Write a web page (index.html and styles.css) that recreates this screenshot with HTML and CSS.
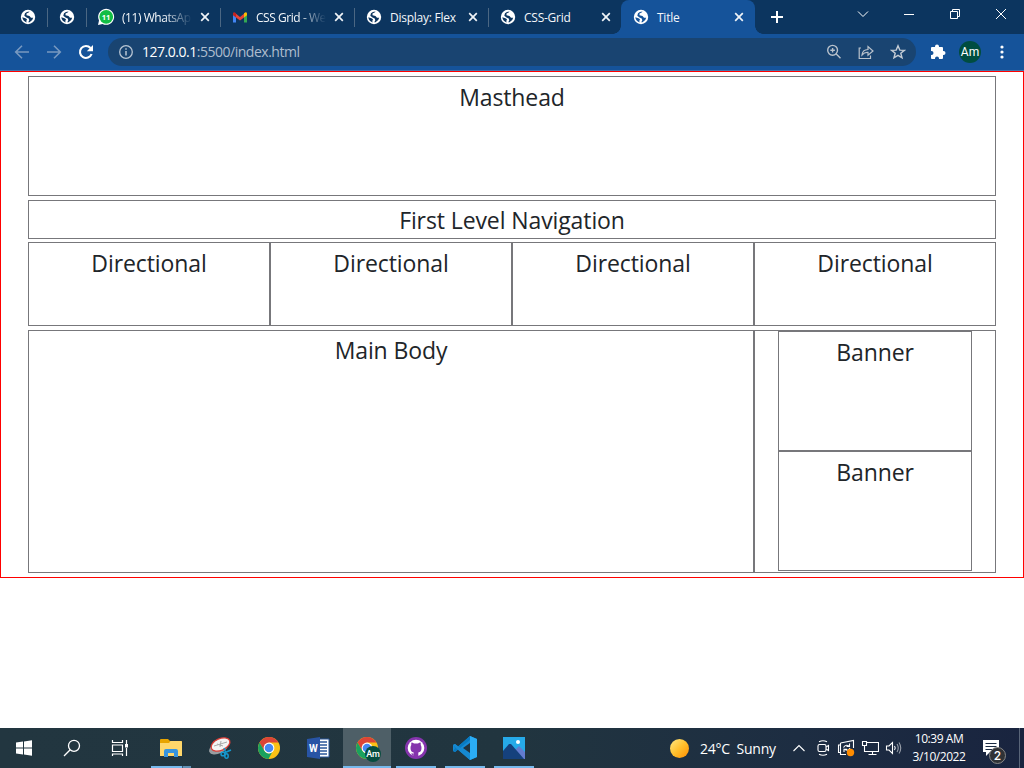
FILE: index.html
```html
<!DOCTYPE html>
<html lang="en">
<head>
<meta charset="utf-8">
<title>Title</title>
<link rel="stylesheet" href="styles.css">
</head>
<body>
<svg class="defs" width="0" height="0">
  <symbol id="globe" viewBox="0 0 16 16">
    <circle cx="8" cy="8" r="7.200" fill="#fff"/>
    <path d="M9 3.200L6.500 4.600V6.300L9.500 7L11 8.800L13.200 8.800Q12.700 12 9.500 13.300L8.300 13.300L9.300 11.200L8.700 9.400L6.500 8.500L4.300 6.700L5 4.200Q6.500 2.600 9.500 2.600ZM2.300 8.300L5.500 9.300L7 10.300L6.300 12L6.600 13.400Q2.800 12.300 2.300 8.300Z" fill="currentColor"/>
  </symbol>
  <symbol id="close" viewBox="0 0 10 10"><path d="M1.200 1.200L8.800 8.800M8.800 1.200L1.200 8.800" stroke="#f0f4f8" stroke-width="1.700"/></symbol>
  <symbol id="chrome" viewBox="0 0 24 24">
    <circle cx="12" cy="12" r="11" fill="#fbc116"/>
    <path d="M2.500 6.500A11 11 0 0 1 21.500 6.500H12L7 14.500Z" fill="#dc4437"/>
    <path d="M2.500 6.500L7.300 14.800Q9 17.500 12 17.500L15.500 15.500L11.500 23A11 11 0 0 1 2.500 6.500Z" fill="#1aa15f"/>
    <circle cx="12" cy="12" r="5.400" fill="#fff"/><circle cx="12" cy="12" r="4.300" fill="#4688f4"/>
  </symbol>
</svg>

<header class="browser">
  <div class="tabs">
    <div class="tab mini first"><svg width="16" height="16"><use href="#globe"/></svg></div>
    <div class="tab mini"><svg width="16" height="16"><use href="#globe"/></svg></div>
    <div class="tab whats">
      <svg width="18" height="18" viewBox="0 0 18 18"><path d="M1 17L2 12.500A8 8 0 1 1 5.500 16Z" fill="#fff"/><circle cx="9.200" cy="8.800" r="6.900" fill="#12bd45"/><text x="9" y="11.700" font-size="7.500" font-weight="700" fill="#fff" text-anchor="middle">11</text></svg>
      <span class="label fade">(11) WhatsAp</span><svg class="x" width="10" height="10"><use href="#close"/></svg>
    </div>
    <div class="tab">
      <svg width="16" height="16" viewBox="0 0 16 16"><path d="M1 4.500V13.500H4V7.500L2.500 4.500Z" fill="#4285f4"/><path d="M15 4.500V13.500H12V7.500L13.500 4.500Z" fill="#34a853"/><path d="M4 4.800L8 8L12 4.800V8.500L8 11.600L4 8.500Z" fill="#ea4335"/><path d="M1 4.500Q1.500 2 4 4.200V8.500L1 6.300Z" fill="#c5221f"/><path d="M15 4.500Q14.500 2 12 4.200V8.500L15 6.300Z" fill="#fbbc04"/></svg>
      <span class="label fade">CSS Grid - We</span><svg class="x" width="10" height="10"><use href="#close"/></svg>
    </div>
    <div class="tab"><svg width="16" height="16"><use href="#globe"/></svg><span class="label">Display: Flex</span><svg class="x" width="10" height="10"><use href="#close"/></svg></div>
    <div class="tab wide"><svg width="16" height="16"><use href="#globe"/></svg><span class="label">CSS-Grid</span><svg class="x" width="10" height="10"><use href="#close"/></svg></div>
    <div class="tab active"><svg width="16" height="16"><use href="#globe"/></svg><span class="label">Title</span><svg class="x" width="10" height="10"><use href="#close"/></svg></div>
    <svg class="plus" width="14" height="14" viewBox="0 0 14 14"><path d="M7 1V13M1 7H13" stroke="#fff" stroke-width="2"/></svg>
    <div class="window-controls">
      <svg width="12" height="12" viewBox="0 0 12 12"><path d="M1 3.500L6 8.500L11 3.500"/></svg>
      <svg width="12" height="12" viewBox="0 0 12 12"><path d="M1 6.500H11"/></svg>
      <svg width="12" height="12" viewBox="0 0 12 12"><path d="M3.500 3.500V1.500H10.500V8.500H8.500M1.500 3.500H8.500V10.500H1.500Z"/></svg>
      <svg width="12" height="12" viewBox="0 0 12 12"><path d="M1 1L11 11M11 1L1 11"/></svg>
    </div>
  </div>
  <div class="toolbar">
    <svg class="nav" width="16" height="16" viewBox="0 0 16 16"><path d="M15 8H2M8 1.700L1.700 8L8 14.300" fill="none" stroke="#7899c0" stroke-width="1.600"/></svg>
    <svg class="nav" width="16" height="16" viewBox="0 0 16 16"><path d="M1 8H14M8 1.700L14.300 8L8 14.300" fill="none" stroke="#7899c0" stroke-width="1.600"/></svg>
    <svg class="nav" width="16" height="16" viewBox="0 0 16 16"><path d="M13.600 10A6 6 0 1 1 12.500 4" fill="none" stroke="#fff" stroke-width="2.100"/><path d="M15 1V7.200H8.800Z" fill="#fff"/></svg>
    <div class="address">
      <svg width="16" height="16" viewBox="0 0 16 16"><circle cx="8" cy="8" r="6.300" fill="none" stroke="#b8c5d3" stroke-width="1.300"/><path d="M8 7V11.500M8 4.300V5.800" stroke="#b8c5d3" stroke-width="1.500"/></svg>
      <span class="url"><b>127.0.0.1</b>:5500/index.html</span>
      <svg width="16" height="16" viewBox="0 0 16 16"><g fill="none" stroke="#b9c2cc" stroke-width="1.400"><circle cx="6.600" cy="6.300" r="4.900"/><path d="M10 9.700L14.500 14.200M4.300 6.300H8.900M6.600 4V8.600"/></g></svg>
      <svg width="16" height="16" viewBox="0 0 16 16"><g fill="none" stroke="#b9c2cc" stroke-width="1.200"><path d="M3 4H1.200V14.500H12.500V11.500M4 11Q4.500 5.700 10 5.500V2.500L15 7L10 11.300V8.400Q6.500 8 4 11Z"/></g></svg>
      <svg width="16" height="16" viewBox="0 0 16 16"><path d="M8 1.800L9.800 6.100L14.300 6.400L10.800 9.300L12 13.800L8 11.300L4 13.800L5.200 9.300L1.700 6.400L6.200 6.100Z" fill="none" stroke="#c4ccd5" stroke-width="1.400"/></svg>
    </div>
    <svg class="ext" width="16" height="16" viewBox="0 0 16 16"><path d="M1 4Q1 3 2 3H5V2.500A2 2 0 0 1 9 2.500V3H12Q13 3 13 4V7H13.500A2 2 0 0 1 13.500 11H13V14Q13 15 12 15H9V14.500A2 2 0 0 0 5 14.500V15H2Q1 15 1 14V11H1.500A2 2 0 0 0 1.500 7H1Z" fill="#fff"/></svg>
    <span class="avatar">Am</span>
    <svg class="more" width="6" height="14" viewBox="0 0 6 14" fill="#fff"><circle cx="3" cy="2" r="1.600"/><circle cx="3" cy="7" r="1.600"/><circle cx="3" cy="12" r="1.600"/></svg>
  </div>
</header>

<main class="page">
  <section class="box masthead">Masthead</section>
  <nav class="box first-nav">First Level Navigation</nav>
  <div class="directionals">
    <div class="box">Directional</div><div class="box">Directional</div><div class="box">Directional</div><div class="box">Directional</div>
  </div>
  <div class="content">
    <section class="box main-body">Main Body</section>
    <aside class="box banners"><div class="box banner">Banner</div><div class="box banner">Banner</div></aside>
  </div>
</main>

<footer class="taskbar">
  <div class="system">
    <div class="cell"><svg width="18" height="18" viewBox="0 0 18 18" fill="#fff"><path d="M1 3.500L8 2.500V8.500H1ZM9 2.400L17 1.200V8.500H9ZM1 9.500H8V15.500L1 14.500ZM9 9.500H17V16.800L9 15.600Z"/></svg></div>
    <div class="cell"><svg width="18" height="18" viewBox="0 0 18 18" fill="none" stroke="#fff" stroke-width="1.300"><circle cx="11" cy="6.800" r="5.500"/><path d="M7.200 10.800L1 17"/></svg></div>
    <div class="cell"><svg width="18" height="18" viewBox="0 0 18 18" fill="none" stroke="#fff" stroke-width="1.200"><path d="M1.500 1V3.500H11.500V1M1.500 6H11.500V12.500H1.500ZM1.500 17V15H11.500V17M15.500 1V5M15.500 9V17"/><path d="M14 5H17V8.500H14Z" fill="#fff" stroke="none"/></svg></div>
  </div>
  <div class="apps">
    <div class="cell open split"><svg width="24" height="24" viewBox="0 0 24 24"><path d="M1 4Q1 3 2 3H9L11 5H22Q23 5 23 6V20H1Z" fill="#e8a400"/><path d="M1 7H10L11.500 5H22Q23 5 23 6V20H1Z" fill="#ffd76b"/><path d="M5 21V15Q5 13 7 13H17Q19 13 19 15V21H15V17H9V21Z" fill="#3794de"/></svg></div>
    <div class="cell"><svg width="24" height="24" viewBox="0 0 24 24"><ellipse cx="10.500" cy="12" rx="10" ry="5.500" transform="rotate(-24 10.500 12)" fill="#999ea2"/><ellipse cx="12.500" cy="8.500" rx="10" ry="5.800" transform="rotate(-24 12.500 8.500)" fill="#f4f4f4" stroke="#dc3d36" stroke-width="1.300"/><path d="M6 10L19 6M13 5L12 11M9 8L15 10" stroke="#aaa" fill="none"/><g fill="none" stroke="#1698cf" stroke-width="1.500"><path d="M16 12L17.800 17M23 14L16 17"/><ellipse cx="15" cy="18" rx="2" ry="1.800"/><ellipse cx="18.500" cy="20" rx="1.700" ry="2.300"/></g></svg></div>
    <div class="cell"><svg width="24" height="24"><use href="#chrome"/></svg></div>
    <div class="cell"><svg width="24" height="24" viewBox="0 0 24 24"><path d="M13 3H23V21H13Z" fill="#fff" stroke="#2b579a"/><path d="M14 6H21M14 9H21M14 12H21M14 15H21M14 18H21" stroke="#2b579a" stroke-width="1.300"/><path d="M1 3L14 1V23L1 21Z" fill="#2854a5"/><text x="7.400" y="15.500" font-size="10" font-weight="700" fill="#fff" text-anchor="middle">W</text></svg></div>
    <div class="cell open full"><svg width="28" height="28" viewBox="0 0 28 28"><use href="#chrome" x="1" y="2" width="24" height="24"/><circle cx="19" cy="20" r="8" fill="#064d40"/><text x="19" y="23.300" font-size="9" font-weight="500" fill="#fff" text-anchor="middle">Am</text></svg></div>
    <div class="cell open"><svg width="24" height="24" viewBox="0 0 24 24"><circle cx="12" cy="12" r="11" fill="#8534ad"/><circle cx="12" cy="12" r="8.300" fill="#fff"/><path d="M9.500 21V17.500Q7.500 18 6.500 16M9.700 16.500Q6.500 16 6.500 12Q6.500 10 7.300 9Q7 7.500 7.500 6.500Q8.800 6.500 10 7.500H14Q15.200 6.500 16.500 6.500Q17 7.500 16.700 9Q17.500 10 17.500 12Q17.500 16 14.300 16.500V21H9.700Z" fill="#8534ad"/></svg></div>
    <div class="cell open"><svg width="26" height="26" viewBox="0 0 26 26"><path d="M18 1L25 4V22L18 25L6 14.500L3 17L1 16V10L3 9L6 11.500Z" fill="#168ad4"/><path d="M18 1L25 4V22L18 25Z" fill="#2badf5"/><path d="M18 8V18L11 13Z" fill="#21343f"/><path d="M1 10L3 13L1 16L3 17L18 5V1L6 11.500Z" fill="#087ac1"/><path d="M1 10L3 9L18 20V25L5 14Z" fill="#1689d1"/></svg></div>
    <div class="cell open"><svg width="24" height="24" viewBox="0 0 24 24"><path d="M1 1H23V23H1Z" fill="#26aae9"/><path d="M13 14L17 10L23 16V23H18Z" fill="#637bce"/><path d="M1 15L7 8H9L22 23H1Z" fill="#15417d"/><circle cx="16" cy="6" r="2" fill="#fff"/></svg></div>
  </div>
  <div class="tray">
    <span class="sun"></span><span class="weather">24°C&nbsp; Sunny</span>
    <svg class="up" width="14" height="14" viewBox="0 0 14 14"><path d="M1.500 10L7 4.500L12.500 10"/></svg>
    <svg width="16" height="18" viewBox="0 0 16 18"><rect x="3" y="5.500" width="8" height="7" rx="1.500"/><path d="M11 8L13.500 6.500V11.500L11 10M4 2.700Q8 .7 12 2.700M4 15.300Q8 17.300 12 15.300"/></svg>
    <svg width="18" height="18" viewBox="0 0 18 18"><path d="M3.500 4L16.500 1.500V9M9 15.500H3.500V4M3.500 6H1.500V13.500H3.500M6.500 8.500Q8.500 5 12 7M12.500 4.500V7.500H9.500M13 9Q11 12.500 8 10.500M7 13V10.200H10"/><circle cx="13.500" cy="13.500" r="3.700" fill="#ff8c00" stroke="none"/></svg>
    <svg width="18" height="18" viewBox="0 0 18 18"><path d="M5.500 3.500H17.500V12.500H5.500M11.500 12.500V16M7.500 15.500H15.500M1.500 2.500H5.500V6.500H1.500ZM3.500 6.500V12.500H7"/></svg>
    <svg class="sound" width="18" height="18" viewBox="0 0 18 18"><path d="M1.500 7H4L7.500 3.500V14.500L4 11H1.500ZM9.500 7Q11 9 9.500 11"/><path d="M12 5Q14.500 9 12 13M14 3.500Q17.500 9 14 14.500" opacity=".55"/></svg>
    <div class="clock"><span>10:39 AM</span><span>3/10/2022</span></div>
    <div class="notice"><svg width="18" height="18" viewBox="0 0 18 18"><path d="M1 1H17V13H8L4 17V13H1Z" fill="#fff" stroke="none"/><path d="M3.500 4.500H14.500M3.500 7.500H14.500M3.500 10.500H11" stroke="#1b2b43"/></svg><span class="badge">2</span></div>
  </div>
</footer>
</body>
</html>
```

FILE: styles.css
```css
* { box-sizing: border-box; }
body { margin: 0; width: 1024px; height: 768px; overflow: hidden; display: flex; flex-direction: column; background: #fff; font-family: "Open Sans", "Noto Sans", sans-serif; }
svg { display: block; flex: none; }
.defs { position: absolute; }

.browser { height: 71px; background: #15539a; border-bottom: 1px solid #4177ae; color: #fff; }
.tabs { display: flex; height: 34px; background: #0c355f; }
.tab { display: flex; align-items: center; width: 134px; height: 34px; padding: 0 10px 0 12px; position: relative; font-size: 12px; color: #0c355f; }
.tab::before { content: ""; position: absolute; left: 0; top: 8px; width: 1px; height: 19px; background: #4b6783; }
.tab.mini { width: 39px; padding-left: 12px; }
.tab.first { width: 47px; padding-left: 20px; }
.tab.first::before, .tab.active::before { display: none; }
.tab.whats { padding-left: 11px; }
.tab.wide { width: 133px; }
.tab.active { background: #15539a; color: #15539a; border-radius: 8px 8px 0 0; padding: 0 11px 0 12px; }
.tab.active::after { content: ""; position: absolute; left: -8px; right: -8px; bottom: 0; height: 8px; background: radial-gradient(circle at 0 0, transparent 7.5px, #15539a 8px) left / 8px 8px no-repeat, radial-gradient(circle at 100% 0, transparent 7.5px, #15539a 8px) right / 8px 8px no-repeat; }
.label { flex: 1; margin-left: 8px; color: #f4f7fa; white-space: nowrap; letter-spacing: -.25px; }
.whats .label { margin-left: 7px; }
.fade { width: 70px; flex: none; margin-right: auto; -webkit-mask-image: linear-gradient(90deg, #000 60%, transparent); mask-image: linear-gradient(90deg, #000 60%, transparent); letter-spacing: -.45px; }
.plus { margin: 10px 0 0 15px; }
.window-controls { display: flex; gap: 34px; margin: 8px 17px 0 auto; fill: none; stroke: #fff; stroke-width: 1; }
.toolbar { display: flex; align-items: center; height: 36px; padding-left: 14px; }
.nav { margin-right: 16px; }
.address { display: flex; align-items: center; gap: 16px; width: 808px; height: 28px; margin-left: -2px; padding: 0 10px; border-radius: 14px; background: #194471; }
.url { flex: 1; margin-left: -8px; font-size: 14px; line-height: 18px; padding-bottom: 1px; color: #aebdce; letter-spacing: -.48px; }
.url b { font-weight: 400; color: #fff; }
.ext { margin-left: 14px; }
.avatar { width: 22px; height: 22px; margin-left: 13px; border-radius: 50%; background: #004d40; font: 400 12px/22px Roboto, sans-serif; text-align: center; }
.more { margin-left: 18px; }

.page { height: 507px; padding: 4px 27px; border: 1px solid #f00; font-size: 23px; line-height: 35px; color: #212529; text-align: center; letter-spacing: -.1px; }
.box { border: 1px solid #77777b; padding-top: 3px; }
.masthead { height: 120px; }
.first-nav { height: 39px; margin-top: 4px; padding-top: 2px; }
.directionals { display: grid; grid-template-columns: repeat(4, 1fr); height: 84px; margin-top: 3px; }
.content { display: grid; grid-template-columns: 3fr 1fr; height: 243px; margin-top: 4px; }
.main-body { padding-top: 2px; }
.banners { padding: 0 23px; }
.banner { height: 120px; }

.taskbar { display: flex; height: 40px; margin-top: auto; background: linear-gradient(90deg, #223640 0%, #21353f 50%, #1d2d42 78%, #19243f 100%); color: #fff; }
.system { display: flex; width: 147px; }
.apps { display: flex; gap: 1px; }
.cell { position: relative; display: flex; align-items: center; justify-content: center; width: 48px; height: 40px; }
.open::after { content: ""; position: absolute; left: 4px; right: 4px; bottom: 0; height: 2px; background: #76b9ed; }
.split::after { background: linear-gradient(90deg, #76b9ed 31px, #365a75 31px 32px, #6090b4 32px); }
.full { background: #4e5f67; }
.full svg { margin-left: 2px; }
.full::after { left: 0; right: 0; }
.cell text { font-family: Roboto, sans-serif; }
.tray { display: flex; align-items: center; margin-left: auto; width: 354px; padding-right: 4px; fill: none; stroke: #fff; stroke-width: 1.1; font-size: 13px; }
.tray svg { margin-right: 6px; }
.sun { width: 19px; height: 19px; border-radius: 50%; background: linear-gradient(135deg, #ffe985, #ffc02d 50%, #ff8d00); }
.weather { width: 82px; margin: 1px 0 0 11px; font-size: 14px; white-space: pre; letter-spacing: -.25px; }
.tray .up { margin: 0 9px 0 10px; }
.tray .sound { margin-right: 0; }
.clock { width: 68px; margin-left: 2px; font-size: 12px; line-height: 18px; text-align: center; letter-spacing: -.45px; }
.clock span { display: block; }
.notice { position: relative; margin-left: auto; width: 38px; height: 40px; padding-top: 11px; border-right: 1px solid #596578; }
.badge { position: absolute; left: 7px; top: 19px; width: 17px; height: 17px; border: 1px solid #888; border-radius: 50%; background: #303236; font: 500 12px/15px Inter, sans-serif; text-align: center; }
```
